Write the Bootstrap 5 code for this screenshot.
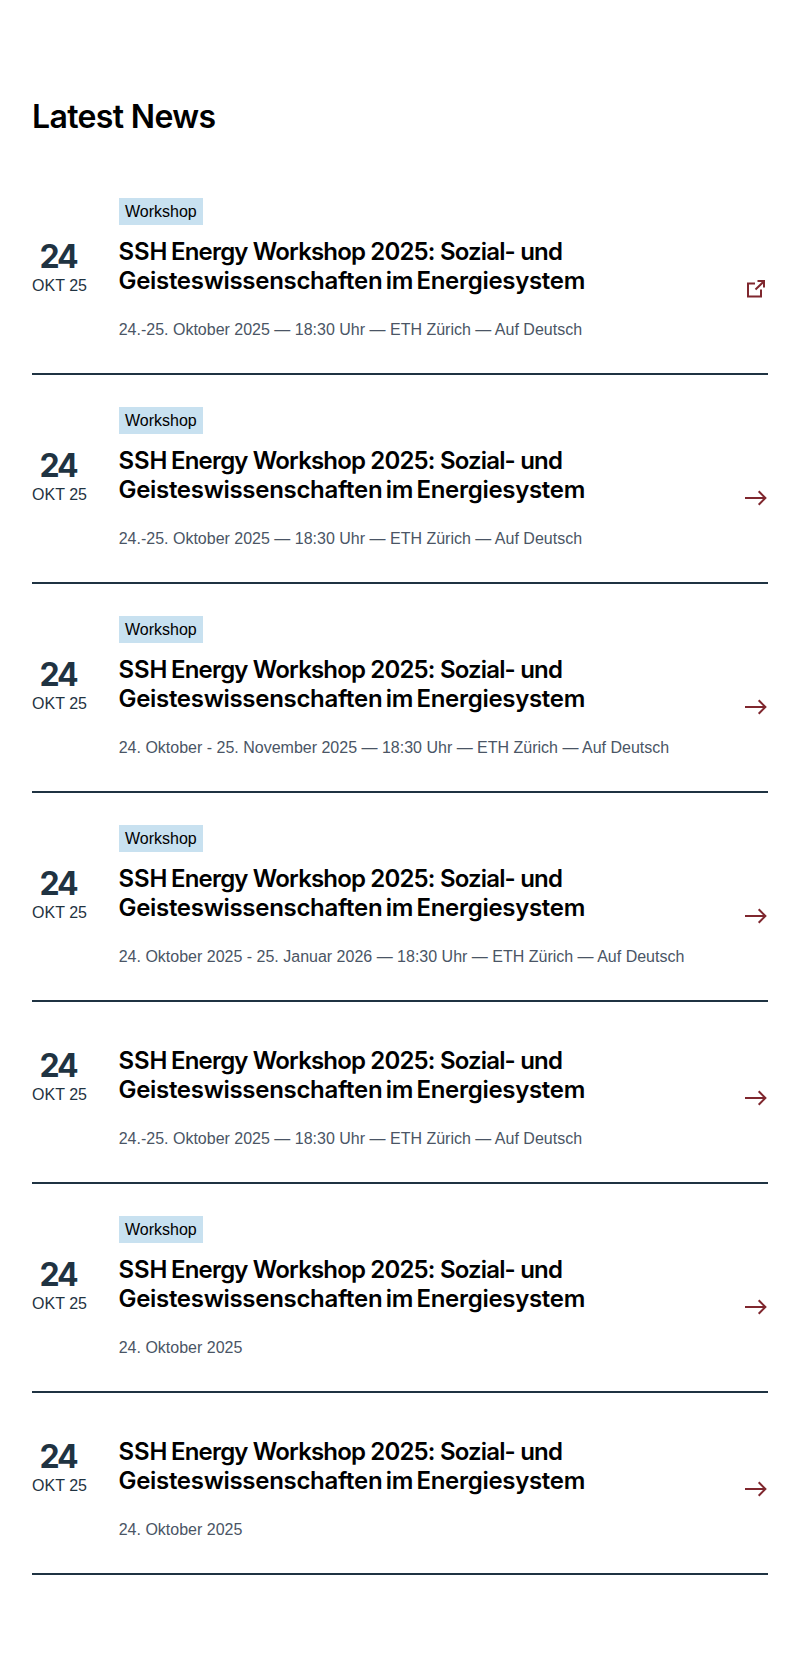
<!DOCTYPE html>
<html lang="de">
<head>
<meta charset="utf-8">
<meta name="viewport" content="width=device-width, initial-scale=1">
<title>Latest News</title>
<link href="https://cdn.jsdelivr.net/npm/bootstrap@5.3.0/dist/css/bootstrap.min.css" rel="stylesheet">
<style>
body{font-family:"Liberation Sans",Arial,sans-serif;font-size:16px;line-height:24px;color:#000;background:#fff}
.news{padding:98px 32px 0}
.news-heading{font:600 32px/38.4px Inter,sans-serif;color:#000;letter-spacing:-.65px;margin:0 0 30px}
.news-item{border-bottom:2px solid #1f3342;padding:32px 0;height:182px}
.news-item.tagged{height:209px}
.tag{margin-left:87px;height:27px;line-height:27px;padding:0 6px;background:#c8e1f0;align-self:flex-start}
.date{width:55px;margin-right:32px;color:#1f3342;padding-top:14px;white-space:nowrap}
.day{font:700 32px/36px Inter,sans-serif;letter-spacing:-2.2px;margin-left:-3px}
.month{line-height:22px}
.title{font:600 24px/29px Inter,sans-serif;color:#000;padding-top:12px;margin:0 0 23px -.5px;white-space:nowrap}
.title .l1{letter-spacing:-.83px}
.title .abbr{letter-spacing:-.1px;word-spacing:-2.2px}
.title .l2{letter-spacing:-.3px;word-spacing:-2.3px}
.meta{color:#4a5565;margin-left:-.3px}
.go{color:#7f272e;width:24px;height:24px;margin:52px 0 0 auto}
</style>
</head>
<body>
<main class="news">
<h1 class="news-heading">Latest News</h1>
<div id="list"></div>
</main>
<svg class="d-none" xmlns="http://www.w3.org/2000/svg">
<symbol id="arrow" viewBox="0 0 24 24"><path d="M1 12H21M14.7 5.3 21.4 12 14.7 18.7" fill="none" stroke="currentColor" stroke-width="2"/></symbol>
<symbol id="external" viewBox="0 0 24 24"><path d="M11 6.5H4V19.5H17V12.5M11.5 12.5 20 4.3M13.5 4H20V10.5" fill="none" stroke="currentColor" stroke-width="2"/></symbol>
</svg>
<script>
const full='24.-25. Oktober 2025 — 18:30 Uhr — ETH Zürich — Auf Deutsch';
const items=[
 [true,full,'external'],[true,full,'arrow'],
 [true,'24. Oktober - 25. November 2025 — 18:30 Uhr — ETH Zürich — Auf Deutsch','arrow'],
 [true,'24. Oktober 2025 - 25. Januar 2026 — 18:30 Uhr — ETH Zürich — Auf Deutsch','arrow'],
 [false,full,'arrow'],[true,'24. Oktober 2025','arrow'],[false,'24. Oktober 2025','arrow']];
document.getElementById('list').innerHTML=items.map(([tag,meta,icon])=>`
<article class="news-item d-flex flex-column ${tag?'tagged':''}">
 ${tag?'<span class="tag">Workshop</span>':''}
 <div class="d-flex">
  <div class="date text-center flex-shrink-0"><div class="day">24</div><div class="month">OKT 25</div></div>
  <div><h2 class="title"><span class="l1"><span class="abbr">SSH </span>Energy Workshop 2025: Sozial- und</span><br><span class="l2">Geisteswissenschaften im Energiesystem</span></h2><div class="meta">${meta}</div></div>
  <svg class="go flex-shrink-0"><use href="#${icon}"/></svg>
 </div>
</article>`).join('');
</script>
<script src="https://cdn.jsdelivr.net/npm/bootstrap@5.3.0/dist/js/bootstrap.bundle.min.js"></script>
</body>
</html>
